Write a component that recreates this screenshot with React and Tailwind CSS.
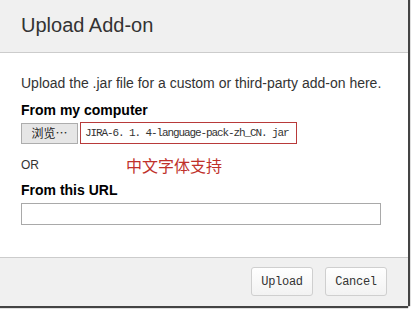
import React from "react";

const sans = { fontFamily: '"Liberation Sans", Arial, sans-serif' };

const App = () => {
  return (
    <div className="w-[413px] h-[310px] bg-white overflow-hidden" style={sans}>
      <div className="w-[408px] h-[306px] flex flex-col bg-white shadow-[2px_0_1px_#444,0_2px_1px_#444]">
        {/* header */}
        <div className="h-[53px] shrink-0 flex items-center px-[21px] pb-[2px] bg-[#f0f0f0] border-b border-[#cccccc]">
          <h2 className="text-[20px] leading-[24px] text-[#333333]">Upload Add-on</h2>
        </div>

        {/* body */}
        <div className="flex-1 px-[21px] pt-[20px] text-[#333333]">
          <p className="text-[14px] leading-[20px]">
            Upload the .jar file for a custom or third-party add-on here.
          </p>
          <div className="mt-[7px] text-[14px] leading-[20px] font-bold text-black">
            From my computer
          </div>
          <div className="mt-[2px] flex items-center h-[22px]">
            <button
              className="h-[21px] w-[57px] border border-[#adadad] bg-[#e6e6e6] text-[12px] leading-none text-[#222]"
              style={{ fontFamily: '"Noto Sans CJK SC", sans-serif' }}
            >
              浏览…
            </button>
            <div className="ml-[2px] h-[22px] w-[217px] border border-[#b83a3a] flex items-center pl-[4px]">
              <span
                className="text-[11px] tracking-[-1.1px] text-[#333]"
                style={{ fontFamily: '"Liberation Mono", "Noto Sans CJK SC", monospace' }}
              >
                JIRA-6. 1. 4-language-pack-zh_CN. jar
              </span>
            </div>
          </div>
          <div className="mt-[14px] flex items-start h-[20px]">
            <span className="text-[12px] leading-[14px] text-[#333]">OR</span>
            <span
              className="ml-[87px] -mt-[3px] text-[16px] leading-[20px] text-[#c0312b]"
              style={{ fontFamily: '"Noto Sans CJK SC", sans-serif' }}
            >
              中文字体支持
            </span>
          </div>
          <div className="mt-[2px] text-[14px] leading-[20px] font-bold text-black">
            From this URL
          </div>
          <input
            type="text"
            className="mt-[3px] block w-[360px] h-[22px] border border-[#a9a9a9] bg-white outline-none"
          />
        </div>

        {/* footer */}
        <div className="h-[49px] shrink-0 bg-[#f0f0f0] border-t border-[#cccccc] flex items-center justify-end gap-[12px] pr-[21px] pb-[1px]">
          {["Upload", "Cancel"].map((label) => (
            <button
              key={label}
              className="h-[29px] w-[62px] rounded-[3px] border border-[#cfcfcf] bg-gradient-to-b from-white to-[#f2f2f2] text-[12px] tracking-[-0.3px] text-[#333]"
              style={{ fontFamily: '"Liberation Mono", monospace' }}
            >
              {label}
            </button>
          ))}
        </div>
      </div>
    </div>
  );
};

export default App;
